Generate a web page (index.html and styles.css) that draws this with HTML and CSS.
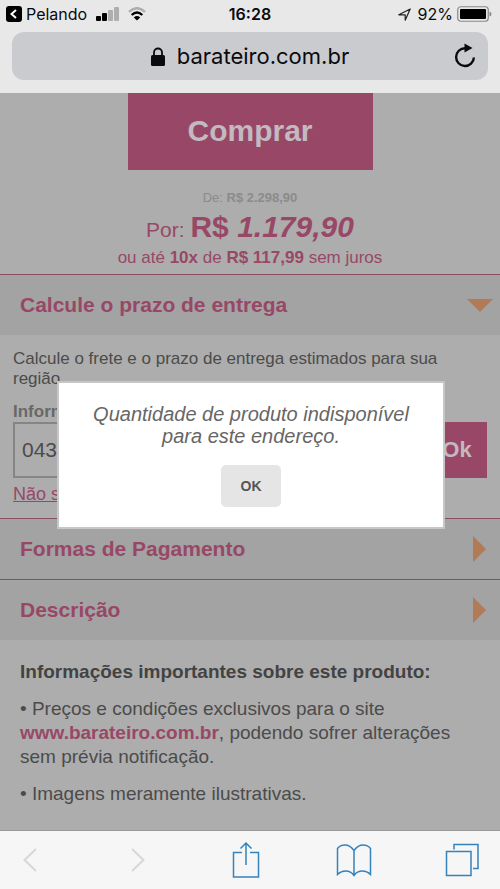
FILE: index.html
```html
<!DOCTYPE html>
<html lang="pt-BR">
<head>
<meta charset="utf-8">
<meta name="viewport" content="width=device-width, initial-scale=1">
<title>Barateiro</title>
<link rel="stylesheet" href="styles.css">
</head>
<body>
<header class="browser">
  <div class="status">
    <div class="status-left">
      <svg class="back-app" viewBox="0 0 16 16"><rect width="16" height="16" rx="3"/><path d="M10 4L5.500 8L10 12" fill="none" stroke="#fff" stroke-width="2"/></svg>
      <span class="app-name">Pelando</span>
      <svg class="signal" viewBox="0 0 23 14"><rect x="0" y="9" width="5" height="5" rx="1"/><rect x="6" y="6" width="5" height="8" rx="1"/><rect x="12" y="3" width="5" height="11" rx="1" fill="#aeaeb0"/><rect x="18" y="0" width="5" height="14" rx="1" fill="#aeaeb0"/></svg>
      <svg class="wifi" viewBox="0 0 18 14"><g fill="none" stroke-width="2.400"><path d="M1 4.800Q9 -2.400 17 4.800" stroke="#aeaeb0"/><path d="M3.700 8Q9 3 14.300 8" stroke="#000"/></g><path d="M5.800 10.400Q9 7.600 12.200 10.400L9 13.600Z"/></svg>
    </div>
    <time class="clock">16:28</time>
    <div class="status-right">
      <svg class="location" viewBox="0 0 13 13"><path d="M.800 6.800L12.200 1L7.200 12.200L7.200 6.800Z" fill="none" stroke="#222" stroke-width="1.200" stroke-linejoin="round"/></svg>
      <span>92%</span>
      <svg class="battery" viewBox="0 0 35 16"><rect x=".75" y=".75" width="30.500" height="14.500" rx="3" fill="none" stroke="#88888a" stroke-width="1.200"/><rect x="3" y="3" width="26" height="10" rx="1"/><path d="M32.500 5.500Q34.500 6 34.500 8T32.500 10.500Z" fill="#88888a"/></svg>
    </div>
  </div>
  <div class="address">
    <svg class="lock" viewBox="0 0 14 19"><path d="M3 9V5.500a4 4 0 0 1 8 0V9" fill="none" stroke="#0a0a0c" stroke-width="1.800"/><rect y="8" width="14" height="11" rx="1.500" fill="#0a0a0c"/></svg>
    <span>barateiro.com.br</span>
    <button class="reload" type="button" aria-label="Recarregar"><svg viewBox="0 0 22 26"><path d="M11 5.200A8.900 8.900 0 1 0 19.900 14.500" fill="none" stroke="#0a0a0c" stroke-width="2.400"/><path d="M10.500 .500L18.500 5L10.500 9.500Z" fill="#0a0a0c"/></svg></button>
  </div>
</header>

<main class="page">
  <button class="buy" type="button">Comprar</button>
  <section class="price">
    <p class="old-price">De: <b>R$ 2.298,90</b></p>
    <p class="new-price">Por: <b>R$ <i>1.179,90</i></b></p>
    <p class="installments">ou até <b>10x</b> de <b>R$ 117,99</b> sem juros</p>
  </section>

  <h2 class="bar">Calcule o prazo de entrega <svg class="arrow-down" viewBox="0 0 26 13"><path d="M0 0H26L13 13Z"/></svg></h2>
  <form class="shipping">
    <p>Calcule o frete e o prazo de entrega estimados para sua região.</p>
    <label for="cep">Informe o CEP:</label>
    <div class="field">
      <input id="cep" type="text" value="043">
      <button class="send" type="button">Ok</button>
    </div>
    <a href="#cep">Não sei meu CEP</a>
  </form>
  <h2 class="bar">Formas de Pagamento <svg class="arrow-right" viewBox="0 0 13 26"><path d="M0 0L13 13L0 26Z"/></svg></h2>
  <h2 class="bar">Descrição <svg class="arrow-right" viewBox="0 0 13 26"><path d="M0 0L13 13L0 26Z"/></svg></h2>
  <section class="description">
    <h3>Informações importantes sobre este produto:</h3>
    <p>• Preços e condições exclusivos para o site <a href="#">www.barateiro.com.br</a>, podendo sofrer alterações sem prévia notificação.</p>
    <p>• Imagens meramente ilustrativas.</p>
  </section>

  <div class="overlay">
    <div class="dialog" role="alertdialog" aria-labelledby="message">
      <p id="message">Quantidade de produto indisponível para este endereço.</p>
      <button type="button">OK</button>
    </div>
  </div>
</main>

<nav class="toolbar">
  <button type="button" aria-label="Voltar"><svg class="chevron" viewBox="0 0 14 24"><path d="M13 1L1.500 12L13 23"/></svg></button>
  <button type="button" aria-label="Avançar"><svg class="chevron" viewBox="0 0 14 24"><path d="M1 1L12.500 12L1 23"/></svg></button>
  <button type="button" aria-label="Compartilhar"><svg class="share" viewBox="0 0 28 38"><path d="M10 11.500H1.500V36H26.500V11.500H18M14 24V2M8.500 7.500L14 2L19.500 7.500"/></svg></button>
  <button type="button" aria-label="Favoritos"><svg class="book" viewBox="0 0 36 34"><path d="M18 7.500Q14 2 9 2Q4 2 1.500 5.500V31.500Q5 28 9.500 28Q15 28 18 32.500Q21 28 26.500 28Q31 28 34.500 31.500V5.500Q32 2 27 2Q22 2 18 7.500V32.500"/></svg></button>
  <button type="button" aria-label="Abas"><svg class="tabs" viewBox="0 0 34 34"><path d="M1.500 8.500H26V32.500H1.500ZM9 6.500V1.500H33V25.500H28"/></svg></button>
</nav>
</body>
</html>
```
FILE: styles.css
```css
* {
  box-sizing: border-box;
}

body {
  margin: 0;
  height: 100vh;
  display: flex;
  flex-direction: column;
  font-family: "Liberation Sans", Arial, sans-serif;
  color: #4b4b4b;
  background: #adadad;
}

button {
  font: inherit;
  border: 0;
  padding: 0;
  background: none;
}

p, h2, h3 {
  margin: 0;
}

svg {
  display: block;
  flex: none;
}

.browser {
  padding: 0 12px 13px;
  background: #e8e8e9;
  color: #0a0a0c;
  font-family: Inter, sans-serif;
}

.status {
  display: grid;
  grid-template-columns: 1fr auto 1fr;
  align-items: center;
  height: 32px;
  padding-bottom: 4px;
  margin: 0 -6px;
  font-size: 16px;
}

.status-left,
.status-right {
  display: flex;
  align-items: center;
  gap: 4px;
}

.status-right {
  justify-content: flex-end;
  padding-right: 2px;
}

.back-app { width: 16px; height: 16px; }
.app-name { margin-right: 5px; }
.signal { width: 23px; height: 14px; margin-right: 5px; }
.wifi { width: 18px; height: 14px; }
.location { width: 13px; height: 13px; margin-right: 3px; }
.battery { width: 35px; height: 16px; }

.clock {
  font-weight: 600;
}

.address {
  position: relative;
  display: flex;
  align-items: center;
  justify-content: center;
  gap: 12px;
  height: 48px;
  border-radius: 12px;
  background: #cacbcf;
  font-size: 22px;
}

.lock { width: 14px; height: 19px; }

.reload {
  position: absolute;
  right: 12px;
  color: inherit;
}

.reload svg { width: 22px; height: 26px; }

.page {
  position: relative;
  flex: 1;
  min-height: 0;
  overflow: hidden;
  background: #adadad;
}

.buy {
  display: block;
  width: 49%;
  height: 77px;
  margin: 0 auto;
  padding-bottom: 2px;
  background: #984866;
  color: #c3b9c0;
  font-size: 30px;
  font-weight: bold;
}

.price {
  padding: 18px 0 7px;
  text-align: center;
  color: #984866;
}

.old-price {
  font-size: 13px;
  line-height: 20px;
  color: #8b8b8b;
}

.new-price {
  font-size: 21px;
  line-height: 38px;
}

.new-price b {
  font-size: 30px;
}

.installments {
  font-size: 17px;
  line-height: 18px;
}

.bar {
  display: flex;
  align-items: center;
  justify-content: space-between;
  height: 61px;
  padding: 0 14px 0 20px;
  border-top: 1px solid #884e62;
  background: #a3a3a3;
  color: #984866;
  font-size: 21px;
}

.bar path { fill: #b17b58; }
.arrow-down { width: 26px; height: 13px; margin-right: -7px; }
.arrow-right { width: 13px; height: 26px; }

.shipping {
  padding: 14px 13px;
  font-size: 17px;
  line-height: 20px;
}

.shipping label {
  display: block;
  margin-top: 13px;
  font-weight: bold;
  color: #686868;
}

.field {
  display: flex;
  height: 56px;
}

.field input {
  flex: 1;
  min-width: 0;
  padding: 0 7px;
  border: 2px solid #858585;
  border-radius: 0;
  background: #adadad;
  color: #4b4b4b;
  font: inherit;
  font-size: 21px;
}

.send {
  width: 60px;
  background: #984866;
  color: #c3b9c0;
  font-size: 22px;
  font-weight: bold;
}

.shipping a {
  display: block;
  margin-top: 6px;
  color: #984866;
  font-size: 18px;
}

.description {
  padding: 20px;
  font-size: 19px;
  line-height: 24px;
}

.description h3 {
  font-size: 19px;
  color: #434343;
}

.description p {
  margin-top: 13px;
}

.description a {
  color: #984866;
  font-weight: bold;
  text-decoration: none;
}

.overlay {
  position: absolute;
  inset: 0;
  display: flex;
  align-items: center;
  justify-content: center;
  padding: 0 0 14px 2px;
}

.dialog {
  width: 78%;
  padding: 20px 32px;
  border: 2px solid #c6c6c6;
  background: #fff;
  text-align: center;
}

.dialog p {
  color: #666;
  font-size: 20px;
  font-style: italic;
  line-height: 22px;
}

.dialog button {
  width: 60px;
  height: 42px;
  margin-top: 18px;
  border-radius: 5px;
  background: #e5e5e5;
  color: #555;
  font-size: 14px;
  font-weight: bold;
}

.toolbar {
  display: flex;
  align-items: center;
  justify-content: space-between;
  height: 59px;
  padding: 0 20px 0 12px;
  border-top: 1px solid #999;
  background: #f6f6f6;
}

.toolbar button {
  display: flex;
  justify-content: center;
  width: 36px;
}

.toolbar path {
  fill: none;
  stroke: #3583bd;
  stroke-width: 1.500;
}

.toolbar .chevron path { stroke: #d7d7d9; stroke-width: 2; }
.chevron { width: 14px; height: 24px; }
.share { width: 28px; height: 38px; }
.book { width: 36px; height: 34px; }
.tabs { width: 34px; height: 34px; }
```
